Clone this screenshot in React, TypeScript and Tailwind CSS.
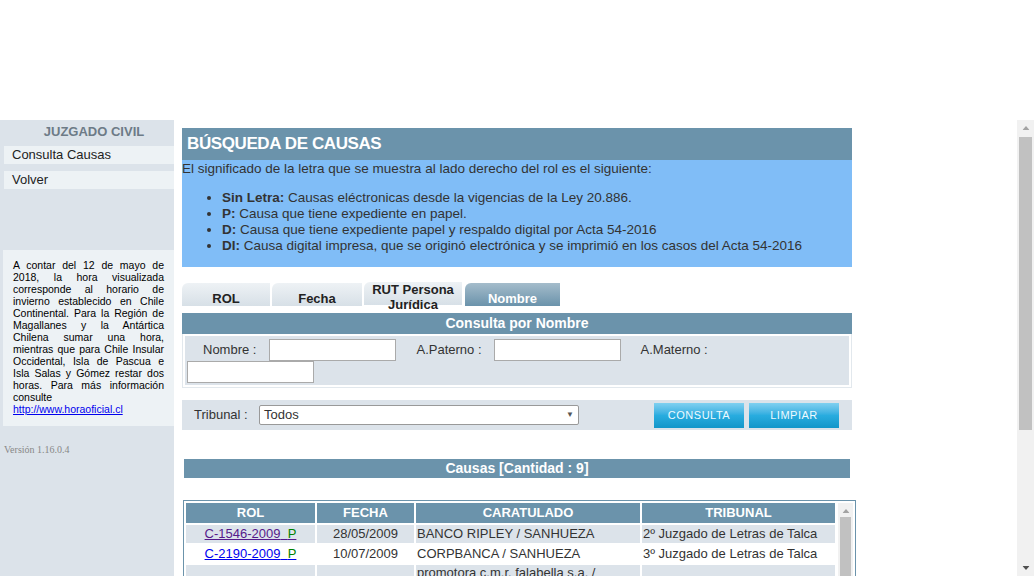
import React from 'react';

const rows = [
  { rol: 'C-1546-2009', visited: true, fecha: '28/05/2009', caratulado: 'BANCO RIPLEY / SANHUEZA', tribunal: '2º Juzgado de Letras de Talca' },
  { rol: 'C-2190-2009', visited: false, fecha: '10/07/2009', caratulado: 'CORPBANCA / SANHUEZA', tribunal: '3º Juzgado de Letras de Talca' },
  { rol: 'C-3307-2009', visited: false, fecha: '02/10/2009', caratulado: 'promotora c.m.r. falabella s.a. / SANHUEZA', tribunal: '1º Juzgado de Letras de Talca' },
  { rol: 'C-1120-2010', visited: false, fecha: '15/03/2010', caratulado: 'BANCO ESTADO / SANHUEZA', tribunal: '2º Juzgado de Letras de Talca' },
];

const font = { fontFamily: '"Liberation Sans", Arial, sans-serif' };

// fake scrollbar, the sandbox browser hides native ones
const ScrollBar: React.FC<{ thumbTop: number; thumbHeight: number; width: string; downArrow?: boolean }> = ({ thumbTop, thumbHeight, width, downArrow = true }) => (
  <div className={`${width} shrink-0 bg-[#f1f1f1] relative h-full`}>
    <svg className="absolute left-1/2 -translate-x-1/2 top-[6px]" width="7" height="4" viewBox="0 0 7 4">
      <polygon points="3.5,0 7,4 0,4" fill="#a3a3a3" />
    </svg>
    <div className="absolute left-[2px] right-[2px] bg-[#c1c1c1]" style={{ top: thumbTop, height: thumbHeight }} />
    {downArrow && (
      <svg className="absolute left-1/2 -translate-x-1/2 bottom-[6px]" width="7" height="4" viewBox="0 0 7 4">
        <polygon points="0,0 7,0 3.5,4" fill="#505050" />
      </svg>
    )}
  </div>
);

const App: React.FC = () => {
  return (
    <div className="h-[576px] w-[1034px] flex flex-col bg-white text-[#333] overflow-hidden" style={font}>
      <div className="h-[120px] shrink-0" />

      <div className="h-[456px] flex">
        <div className="flex-1 overflow-hidden">
          <div className="flex min-h-[660px]">
            {/* Sidebar */}
            <aside className="w-[174px] shrink-0 bg-[#dce3ea] pt-[3px]">
              <h3 className="text-center pl-[14px] text-[13px] font-bold text-[#6d7b87] leading-[17px]">JUZGADO CIVIL</h3>
              <ul className="mt-[6px] ml-[4px] space-y-[7px] text-[13px] text-[#222]">
                <li className="bg-[#edf2f5] h-[18px] pl-[8px] leading-[18px]">Consulta Causas</li>
                <li className="bg-[#edf2f5] h-[18px] pl-[8px] leading-[18px]">Volver</li>
              </ul>
              <div className="mt-[61px] ml-[3px] h-[176px] bg-[#edf2f5] px-[10px] pt-[9px] text-[10.5px] leading-[12px] text-black text-justify">
                A contar del 12 de mayo de 2018, la hora visualizada corresponde al horario de invierno establecido en Chile Continental. Para la Región de Magallanes y la Antártica Chilena sumar una hora, mientras que para Chile Insular Occidental, Isla de Pascua e Isla Salas y Gómez restar dos horas. Para más información consulte{' '}
                <a href="#" className="text-[#0000ee] underline">http://www.horaoficial.cl</a>
              </div>
              <p className="mt-[16px] ml-[4px] text-[10px] text-[#888]" style={{ fontFamily: '"Liberation Serif", serif' }}>
                Versión 1.16.0.4
              </p>
            </aside>

            {/* Main */}
            <main className="w-[674px] ml-[8px] pt-[8px]">
              <div className="w-[670px] bg-[#6b93ab] h-[32px] px-[5px] flex items-center">
                <h1 className="text-white text-[17px] font-bold tracking-[-0.4px]">BÚSQUEDA DE CAUSAS</h1>
              </div>
              <div className="w-[670px] bg-[#80bdf7] h-[107px] text-[13.5px] leading-[16px] text-[#333] pt-[1px]">
                <p>El significado de la letra que se muestra al lado derecho del rol es el siguiente:</p>
                <ul className="list-disc ml-[40px] mt-[13px]">
                  <li><b>Sin Letra:</b> Causas eléctronicas desde la vigencias de la Ley 20.886.</li>
                  <li><b>P:</b> Causa que tiene expediente en papel.</li>
                  <li><b>D:</b> Causa que tiene expediente papel y respaldo digital por Acta 54-2016</li>
                  <li><b>DI:</b> Causa digital impresa, que se originó electrónica y se imprimió en los casos del Acta 54-2016</li>
                </ul>
              </div>

              {/* Tabs */}
              <div className="flex items-end gap-[2px] mt-[15px] h-[23px] text-[13px] font-bold">
                <div className="w-[88px] h-[23px] rounded-tl-[6px] bg-gradient-to-b from-[#eef2f5] to-[#d7e0e7] text-[#222] flex items-end justify-center leading-[15px] -mb-[1px]">ROL</div>
                <div className="w-[90px] h-[23px] rounded-tl-[6px] bg-gradient-to-b from-[#eef2f5] to-[#d7e0e7] text-[#222] flex items-end justify-center leading-[15px] -mb-[1px]">Fecha</div>
                <div className="w-[98px] h-[23px] rounded-tl-[6px] bg-gradient-to-b from-[#eef2f5] to-[#d7e0e7] text-[#222] text-center leading-[15px] relative">
                  <span className="absolute left-0 right-0 top-0">RUT Persona<br />Jurídica</span>
                </div>
                <div className="w-[95px] h-[23px] ml-[1px] rounded-tl-[6px] bg-gradient-to-b from-[#a4bccb] to-[#6b93ab] text-white flex items-end justify-center leading-[15px] -mb-[1px]">Nombre</div>
              </div>

              <div className="w-[670px] mt-[8px] bg-[#6b93ab] h-[21px] text-center text-white text-[14px] font-bold leading-[21px]">Consulta por Nombre</div>
              <div className="w-[670px] border border-[#e2e8ed] border-t-0 p-[2px] bg-white">
                <div className="bg-[#dce3ea] h-[49px] text-[13px] text-[#333] pt-[3px]">
                  <div className="flex items-center h-[22px]">
                    <label className="ml-[18px]">Nombre :</label>
                    <input className="ml-[13px] w-[127px] h-[22px] bg-white border border-[#aaa]" />
                    <label className="ml-[20px]">A.Paterno :</label>
                    <input className="ml-[12px] w-[127px] h-[22px] bg-white border border-[#aaa]" />
                    <label className="ml-[20px]">A.Materno :</label>
                  </div>
                  <input className="ml-[2px] w-[127px] h-[22px] bg-white border border-[#aaa] block" />
                </div>
              </div>

              <div className="w-[670px] mt-[12px] bg-[#dce3ea] h-[30px] flex items-center text-[13px] text-[#333]">
                <label className="ml-[12px] w-[65px]">Tribunal :</label>
                <div className="w-[320px] h-[20px] bg-white border border-[#999] rounded-[2px] flex items-center justify-between px-[4px]">
                  <span>Todos</span>
                  <span className="text-[8px] text-[#555]">▼</span>
                </div>
                <button className="ml-[75px] w-[90px] h-[25px] bg-gradient-to-b from-[#7fd0f0] via-[#28acdf] to-[#1296c9] text-[#eefaff] text-[11px] tracking-[0.5px]">CONSULTA</button>
                <button className="ml-[5px] w-[90px] h-[25px] bg-gradient-to-b from-[#7fd0f0] via-[#28acdf] to-[#1296c9] text-[#eefaff] text-[11px] tracking-[0.5px]">LIMPIAR</button>
              </div>

              <div className="w-[666px] mt-[29px] mx-[2px] bg-[#6b93ab] h-[19px] text-center text-white text-[14px] font-bold leading-[19px]">Causas [Cantidad : 9]</div>

              <div className="mt-[22px] ml-[1px] w-[673px] border border-[#6b93ab] h-[200px] flex">
                <div className="w-[653px] overflow-hidden">
                  <table className="table-fixed w-[653px] border-separate border-spacing-[2px] text-[13px] text-[#333]">
                    <colgroup>
                      <col className="w-[129px]" />
                      <col className="w-[97px]" />
                      <col className="w-[224px]" />
                      <col className="w-[193px]" />
                    </colgroup>
                    <thead>
                      <tr className="bg-[#6b93ab] text-white h-[19px]">
                        <th className="font-bold">ROL</th>
                        <th className="font-bold">FECHA</th>
                        <th className="font-bold">CARATULADO</th>
                        <th className="font-bold">TRIBUNAL</th>
                      </tr>
                    </thead>
                    <tbody>
                      {rows.map((r, i) => (
                        <tr key={r.rol} className={i % 2 === 0 ? 'bg-[#dce3ea]' : 'bg-white'}>
                          <td className="text-center h-[18px] leading-[16px]">
                            <a href="#" className={`underline ${r.visited ? 'text-[#551a8b]' : 'text-[#0000ee]'}`}>
                              {r.rol}&nbsp;&nbsp;<span className="text-[#008000]">P</span>
                            </a>
                          </td>
                          <td className="text-center leading-[16px]">{r.fecha}</td>
                          <td className="px-[1px] leading-[16px]">{r.caratulado}</td>
                          <td className="px-[1px] leading-[16px]">{r.tribunal}</td>
                        </tr>
                      ))}
                    </tbody>
                  </table>
                </div>
                <div className="mt-[2px] ml-[1px]">
                  <ScrollBar width="w-[15px]" thumbTop={14} thumbHeight={160} downArrow={false} />
                </div>
              </div>
            </main>
          </div>
        </div>

        <ScrollBar width="w-[17px]" thumbTop={17} thumbHeight={293} />
      </div>
    </div>
  );
};

export default App;
